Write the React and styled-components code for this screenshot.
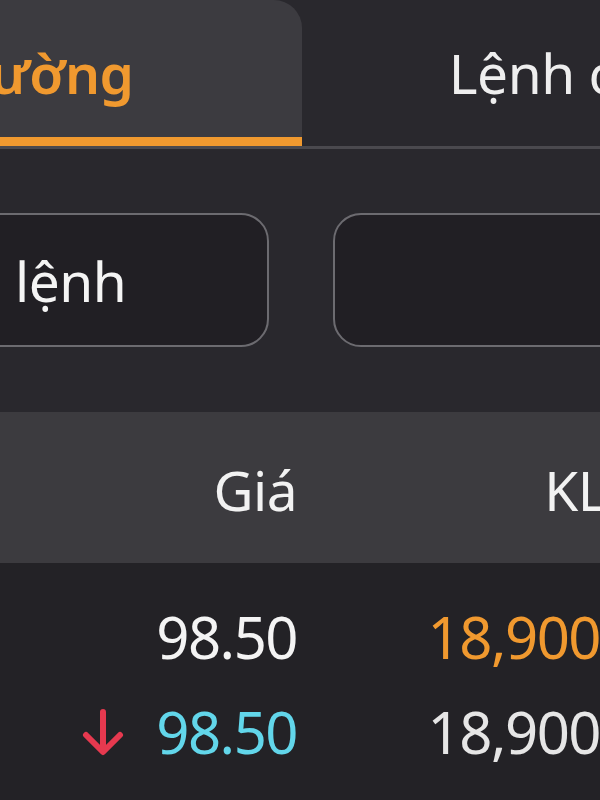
import React from "react";
import styled, { createGlobalStyle } from "styled-components";

const GlobalStyle = createGlobalStyle`
  html, body {
    margin: 0;
    padding: 0;
    background: #29282d;
  }
  body {
    font-family: "Noto Sans", "Open Sans", sans-serif;
    overflow: hidden;
  }
`;

const Page = styled.div`
  width: 600px;
  height: 800px;
  overflow: hidden;
  background: #29282d;
  color: #f2f2f2;
  display: flex;
  flex-direction: column;
`;

const TabBar = styled.div`
  display: flex;
  flex: 0 0 149px;
  margin-left: -244px;
  border-bottom: 3px solid #4a494e;
  box-sizing: border-box;
`;

const Tab = styled.div`
  flex: 0 0 546px;
  display: flex;
  justify-content: center;
  align-items: flex-start;
  box-sizing: border-box;
  height: 146px;
  padding-top: 35px;
  padding-right: ${({ active }) => (active ? "0" : "20px")};
  font-size: 55px;
  line-height: 76px;
  letter-spacing: -0.5px;
  font-weight: ${({ active }) => (active ? 600 : 400)};
  color: ${({ active }) => (active ? "#f0992f" : "#eeeeee")};
  background: ${({ active }) => (active ? "#3c3b40" : "transparent")};
  border-top-right-radius: ${({ active }) => (active ? "28px" : "0")};
  border-bottom: 9px solid ${({ active }) => (active ? "#f0992f" : "transparent")};
`;

const FormRow = styled.div`
  display: flex;
  gap: 64px;
  padding: 64px 0 65px;
  margin-left: -151px;
`;

const Field = styled.div`
  flex: 0 0 420px;
  height: 134px;
  box-sizing: border-box;
  display: flex;
  align-items: center;
  padding-left: 45px;
  border: 2px solid #6c6b70;
  border-radius: 28px;
  background: #211f24;
  font-size: 55px;
  letter-spacing: -0.5px;
  color: #f4f4f4;
`;

const Table = styled.div`
  flex: 1;
  display: flex;
  flex-direction: column;
`;

const HeadRow = styled.div`
  display: grid;
  grid-template-columns: 297px 309px;
  height: 151px;
  background: #3c3b3f;
`;

const HeadCell = styled.div`
  display: flex;
  justify-content: flex-end;
  align-items: center;
  padding-top: 3px;
  font-size: 55px;
  letter-spacing: -0.5px;
  color: #f2f2f2;
`;

const Body = styled.div`
  flex: 1;
  display: grid;
  grid-template-columns: 297px 303px;
  grid-auto-rows: 95px;
  align-content: start;
  padding-top: 26px;
  background: #232226;
`;

const Cell = styled.div`
  display: flex;
  justify-content: flex-end;
  align-items: center;
  gap: 31px;
  font-size: 58px;
  line-height: 95px;
  letter-spacing: -1.5px;
  color: ${({ tone }) => tone || "#f4f4f4"};
`;

const DownArrow = () => (
  <svg width="44" height="48" viewBox="0 0 44 48" fill="none">
    <path
      d="M22 4 V43 M5 27 L22 44 L39 27"
      stroke="#e6394f"
      strokeWidth="6"
      strokeLinecap="round"
      strokeLinejoin="round"
    />
  </svg>
);

const rows = [
  { price: "98.50", priceTone: "#f4f4f4", vol: "18,900", volTone: "#f0992f" },
  { price: "98.50", priceTone: "#62d6ea", vol: "18,900", volTone: "#e6e6e6", down: true },
];

export default function App() {
  return (
    <Page>
      <GlobalStyle />
      <TabBar>
        <Tab active>Thường</Tab>
        <Tab>Lệnh chờ</Tab>
      </TabBar>
      <FormRow>
        <Field>Loại lệnh</Field>
        <Field />
      </FormRow>
      <Table>
        <HeadRow>
          <HeadCell>Giá</HeadCell>
          <HeadCell>KL</HeadCell>
        </HeadRow>
        <Body>
          {rows.map((r, i) => (
            <React.Fragment key={i}>
              <Cell tone={r.priceTone}>
                {r.down && <DownArrow />}
                {r.price}
              </Cell>
              <Cell tone={r.volTone}>{r.vol}</Cell>
            </React.Fragment>
          ))}
        </Body>
      </Table>
    </Page>
  );
}
